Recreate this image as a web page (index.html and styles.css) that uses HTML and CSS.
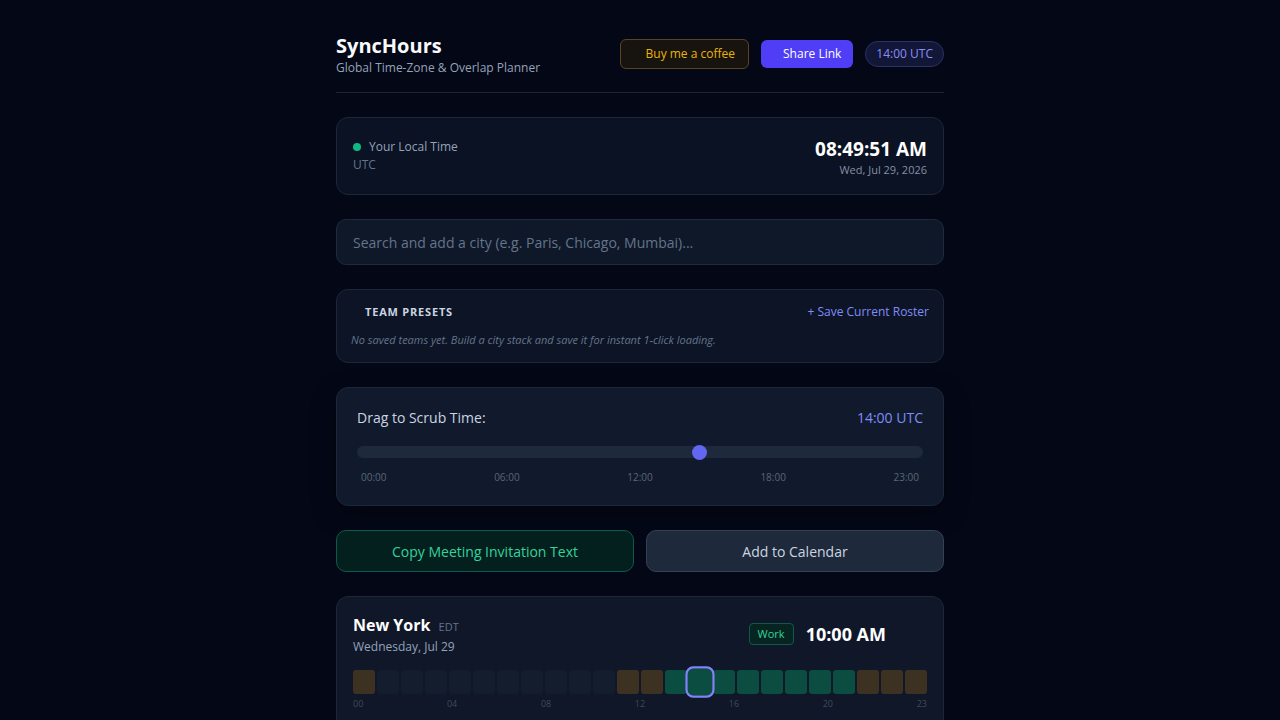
FILE: index.html
```html
<!DOCTYPE html>
<html lang="en">
<head>
    <meta charset="UTF-8">
    <meta name="viewport" content="width=device-width, initial-scale=1.0">
    <title>SyncHours</title>
    <link rel="stylesheet" href="styles.css">
</head>
<body>
    <div class="wrap">
        <div class="header">
            <div class="brand">
                <h1>SyncHours</h1>
                <p>Global Time-Zone &amp; Overlap Planner</p>
            </div>
            <div class="header-actions">
                <button class="btn-coffee">Buy me a coffee</button>
                <button class="btn-share">Share Link</button>
                <span class="utc-pill">14:00 UTC</span>
            </div>
        </div>

        <div class="card local-card">
            <div class="local-left">
                <div class="local-label"><span class="dot"></span>Your Local Time</div>
                <div class="local-zone">UTC</div>
            </div>
            <div class="local-right">
                <div class="local-time">08:49:51 AM</div>
                <div class="local-date">Wed, Jul 29, 2026</div>
            </div>
        </div>

        <input class="search" type="text" placeholder="Search and add a city (e.g. Paris, Chicago, Mumbai)...">

        <div class="card presets">
            <div class="presets-head">
                <span class="presets-title">TEAM PRESETS</span>
                <a class="save-link">+ Save Current Roster</a>
            </div>
            <p class="presets-empty">No saved teams yet. Build a city stack and save it for instant 1-click loading.</p>
        </div>

        <div class="card scrub">
            <div class="scrub-head">
                <span>Drag to Scrub Time:</span>
                <span class="scrub-value">14:00 UTC</span>
            </div>
            <input class="range" type="range" min="0" max="23" value="14">
            <div class="scrub-ticks">
                <span>00:00</span><span>06:00</span><span>12:00</span><span>18:00</span><span>23:00</span>
            </div>
        </div>

        <div class="actions">
            <button class="btn-copy">Copy Meeting Invitation Text</button>
            <button class="btn-cal">Add to Calendar</button>
        </div>

        <div class="card city">
            <div class="city-head">
                <div>
                    <div class="city-name">New York <span class="city-abbr">EDT</span></div>
                    <div class="city-date">Wednesday, Jul 29</div>
                </div>
                <div class="city-right">
                    <span class="badge-work">Work</span>
                    <span class="city-time">10:00 AM</span>
                </div>
            </div>
            <div class="hours" id="hours"></div>
            <div class="hour-labels">
                <span>00</span><span>04</span><span>08</span><span>12</span><span>16</span><span>20</span><span>23</span>
            </div>
        </div>
    </div>

    <script>
        // hour blocks: n = night, t = twilight, w = work
        const pattern = 'tnnnnnnnnnnttwwwwwwwwttt';
        const hours = document.getElementById('hours');
        for (let i = 0; i < 24; i++) {
            const b = document.createElement('div');
            b.className = 'hour ' + pattern[i];
            if (i === 14) b.classList.add('current');
            hours.appendChild(b);
        }
    </script>
</body>
</html>
```

FILE: styles.css
```css
body {
    margin: 0;
    background-color: #040716;
    font-family: "Open Sans", "Noto Sans", sans-serif;
    color: #e2e8f0;
}
.wrap {
    width: 608px;
    margin: 0 auto;
    padding-top: 32px;
}
.header {
    display: flex;
    justify-content: space-between;
    align-items: center;
    padding-bottom: 16px;
    border-bottom: 1px solid #1c2536;
    margin-bottom: 24px;
}
.brand h1 {
    margin: 0;
    font-size: 20px;
    font-weight: 700;
    color: #f8fafc;
    line-height: 28px;
}
.brand p {
    margin: 0;
    font-size: 12px;
    color: #94a3b8;
    line-height: 16px;
}
.header-actions {
    display: flex;
    align-items: center;
    gap: 12px;
    margin-top: -1px;
}
button {
    font-family: inherit;
    cursor: pointer;
}
.btn-coffee {
    height: 30px;
    padding: 0 13px 0 25px;
    background-color: #17130f;
    border: 1px solid #5b4321;
    border-radius: 6px;
    color: #eab308;
    font-size: 12px;
}
.btn-share {
    height: 28px;
    padding: 0 12px 0 22px;
    background-color: #4f3ef5;
    border: none;
    border-radius: 6px;
    color: #ffffff;
    font-size: 12px;
}
.utc-pill {
    height: 24px;
    line-height: 24px;
    padding: 0 10px;
    background-color: #121637;
    border: 1px solid #2b3168;
    border-radius: 13px;
    color: #8b8ff5;
    font-size: 12px;
}
.card {
    background-color: #0b1223;
    border: 1px solid #1c2738;
    border-radius: 12px;
    margin-bottom: 24px;
}
.local-card {
    display: flex;
    justify-content: space-between;
    align-items: center;
    padding: 19px 16px 15px;
}
.local-left {
    margin-bottom: 4px;
}
.local-label {
    display: flex;
    align-items: center;
    font-size: 12px;
    color: #94a3b8;
    line-height: 18px;
}
.dot {
    width: 8px;
    height: 8px;
    border-radius: 50%;
    background-color: #10b981;
    margin-right: 8px;
}
.local-zone {
    font-size: 12px;
    color: #64748b;
    line-height: 18px;
}
.local-right {
    text-align: right;
}
.local-time {
    font-size: 19px;
    font-weight: 700;
    color: #ffffff;
    line-height: 24px;
}
.local-date {
    font-size: 11px;
    color: #8390a3;
    line-height: 18px;
}
.search {
    display: block;
    box-sizing: border-box;
    width: 100%;
    height: 46px;
    margin-bottom: 24px;
    padding: 0 16px;
    background-color: #0f1829;
    border: 1px solid #1f2a3c;
    border-radius: 10px;
    font-family: inherit;
    font-size: 14px;
    color: #e2e8f0;
    outline: none;
}
.search::placeholder {
    color: #64748b;
}
.presets {
    padding: 12px 14px 14px;
    background-color: #0c1426;
}
.presets-head {
    display: flex;
    justify-content: space-between;
    align-items: center;
    line-height: 20px;
}
.presets-title {
    padding-left: 14px;
    font-size: 11px;
    font-weight: 700;
    letter-spacing: 0.8px;
    color: #cbd5e1;
}
.save-link {
    font-size: 12px;
    color: #818cf8;
    cursor: pointer;
}
.presets-empty {
    margin: 10px 0 0;
    font-size: 11px;
    font-style: italic;
    color: #64748b;
    line-height: 16px;
}
.scrub {
    padding: 20px 20px 21px;
    background-color: #101a2c;
    box-shadow: 0 8px 24px rgba(0, 0, 0, 0.35);
}
.scrub-head {
    display: flex;
    justify-content: space-between;
    font-size: 14px;
    color: #cbd5e1;
    line-height: 20px;
}
.scrub-value {
    color: #818cf8;
}
.range {
    -webkit-appearance: none;
    appearance: none;
    display: block;
    width: 100%;
    height: 12px;
    margin: 18px 0 12px;
    background-color: #1e293b;
    border-radius: 6px;
    outline: none;
}
.range::-webkit-slider-thumb {
    -webkit-appearance: none;
    width: 15px;
    height: 15px;
    border-radius: 50%;
    background-color: #6366f1;
    border: none;
}
.scrub-ticks {
    display: flex;
    justify-content: space-between;
    padding: 0 4px;
    font-size: 10px;
    color: #5b6678;
}
.actions {
    display: flex;
    gap: 12px;
    margin-bottom: 24px;
}
.actions button {
    flex: 1;
    height: 42px;
    border-radius: 10px;
    font-size: 14px;
}
.btn-copy {
    background-color: #03201f;
    border: 1px solid #0e5a46;
    color: #34d399;
}
.btn-cal {
    background-color: #1e293b;
    border: 1px solid #334155;
    color: #cbd5e1;
}
.city {
    padding: 17px 16px 20px;
    background-color: #0f1729;
}
.city-head {
    display: flex;
    justify-content: space-between;
    align-items: center;
    margin-bottom: 14px;
}
.city-name {
    font-size: 16px;
    font-weight: 700;
    color: #ffffff;
    line-height: 22px;
}
.city-abbr {
    margin-left: 4px;
    font-size: 11px;
    font-weight: 400;
    color: #64748b;
}
.city-date {
    font-size: 12px;
    color: #94a3b8;
    line-height: 18px;
}
.city-right {
    display: flex;
    align-items: center;
    gap: 12px;
    margin-right: 41px;
    margin-bottom: 2px;
}
.badge-work {
    height: 22px;
    line-height: 20px;
    padding: 0 8px;
    box-sizing: border-box;
    background-color: #062521;
    border: 1px solid #11584a;
    border-radius: 4px;
    font-size: 11px;
    color: #34d399;
}
.city-time {
    font-size: 18px;
    font-weight: 700;
    color: #ffffff;
}
.hours {
    display: flex;
    gap: 2px;
}
.hour {
    flex: 1;
    height: 24px;
    border-radius: 3px;
    box-sizing: border-box;
}
.hour.n {
    background-color: #131d2e;
}
.hour.t {
    background-color: #3d3121;
}
.hour.w {
    background-color: #0b4d41;
}
.hour.current {
    outline: 2px solid #7f84f6;
    border-radius: 5px;
    transform: scale(1.12);
}
.hour-labels {
    display: flex;
    justify-content: space-between;
    margin-top: 3px;
    font-size: 9px;
    color: #3f4a5c;
}
```
